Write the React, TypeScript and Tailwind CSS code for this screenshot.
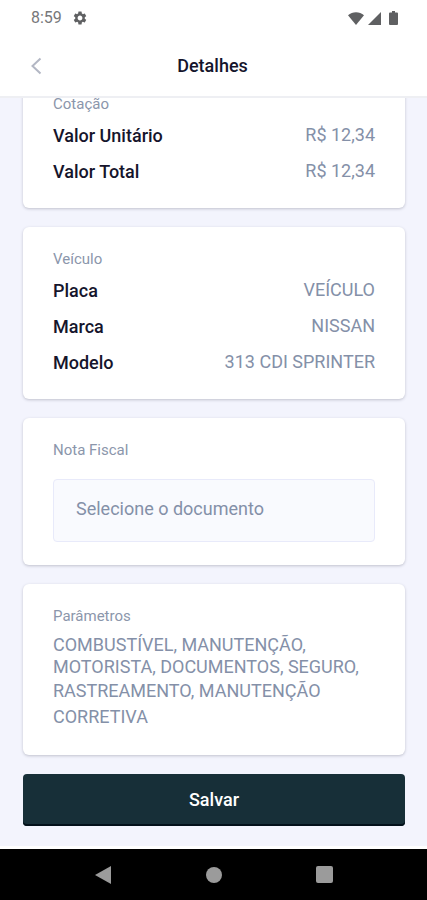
import type { ReactNode } from "react";
import { MdSettings } from "react-icons/md";

const quote = [
  { label: "Valor Unitário", value: "R$ 12,34" },
  { label: "Valor Total", value: "R$ 12,34" },
];

const vehicle = [
  { label: "Placa", value: "VEÍCULO" },
  { label: "Marca", value: "NISSAN" },
  { label: "Modelo", value: "313 CDI SPRINTER" },
];

function StatusBar() {
  return (
    <div className="flex h-9 items-center justify-between pl-[31px] pr-[29px] text-[#5f6062]">
      <div className="flex items-center gap-2.5">
        <span className="text-base text-[#77787a]">8:59</span>
        <MdSettings className="h-4 w-4" />
      </div>
      <div className="flex items-center gap-1">
        <svg viewBox="0 0 16 13" className="h-[13px] w-4" fill="currentColor">
          <path d="M0 3.2C4.4-.9 11.6-.9 16 3.2L8 13z" />
        </svg>
        <svg viewBox="0 0 13 13" className="h-[13px] w-[13px]" fill="currentColor">
          <path d="M13 0v13H0z" />
        </svg>
        <svg viewBox="0 0 9 14" className="ml-1 h-[14px] w-[9px]" fill="currentColor">
          <path d="M3 0h3v1.500h2a1 1 0 0 1 1 1V13a1 1 0 0 1-1 1H1a1 1 0 0 1-1-1V2.500a1 1 0 0 1 1-1h2z" />
        </svg>
      </div>
    </div>
  );
}

function Card({ title, children }: { title: string; children: ReactNode }) {
  return (
    <section className="rounded-md bg-white px-[30px] pt-6 shadow-[0_1px_3px_rgba(40,45,65,0.25)]">
      <h2 className="text-[15px] leading-4 text-[#8b96ab]">{title}</h2>
      {children}
    </section>
  );
}

function Rows({ items }: { items: { label: string; value: string }[] }) {
  return (
    <dl className="pt-1.5 pb-[18px]">
      {items.map((item) => (
        <div key={item.label} className="flex h-9 items-center justify-between text-lg">
          <dt className="font-medium text-[#15152c]">{item.label}</dt>
          <dd className="pb-0.5 text-[#8490a8]">{item.value}</dd>
        </div>
      ))}
    </dl>
  );
}

export default function App() {
  return (
    <div className="flex h-screen flex-col bg-[#f3f4fd] font-['Roboto','Noto_Sans',sans-serif]">
      <header className="border-b-2 border-[#eeeff3] bg-white">
        <StatusBar />
        <div className="grid h-[60px] grid-cols-[1fr_auto_1fr] items-center pl-[29px] pr-[31px]">
          <button type="button" aria-label="Voltar" className="w-4 text-[#b3b7c4]">
            <svg viewBox="0 0 16 18" className="h-[18px] w-4" fill="none" stroke="currentColor" strokeWidth="2">
              <path d="M11.500 1.500L3.500 9l8 7.500" />
            </svg>
          </button>
          <h1 className="text-lg font-medium text-[#15152c]">Detalhes</h1>
        </div>
      </header>

      {/* reversed column keeps the form scrolled to its end */}
      <main className="flex min-h-0 flex-1 flex-col-reverse overflow-y-auto [scrollbar-width:none]">
        <form className="flex flex-col gap-[19px] pt-5 pr-[22px] pb-5 pl-[23px]">
          <Card title="Cotação">
            <Rows items={quote} />
          </Card>
          <Card title="Veículo">
            <Rows items={vehicle} />
          </Card>
          <Card title="Nota Fiscal">
            <div className="pt-[21px] pb-[23px]">
              <button
                type="button"
                className="h-[63px] w-full rounded border border-[#e8eafa] bg-[#f9fafe] px-[22px] pb-1 text-left text-lg text-[#8490a8]"
              >
                Selecione o documento
              </button>
            </div>
          </Card>
          <Card title="Parâmetros">
            <div className="pt-2.5 pb-[25px] text-lg text-[#8490a8]">
              <p className="leading-[22px]">
                COMBUSTÍVEL, MANUTENÇÃO,
                <br />
                MOTORISTA, DOCUMENTOS, SEGURO,
              </p>
              <p className="leading-[26px]">
                RASTREAMENTO, MANUTENÇÃO
                <br />
                CORRETIVA
              </p>
            </div>
          </Card>
          <button
            type="submit"
            className="h-[52px] rounded bg-[#172f38] text-lg font-medium text-white shadow-[inset_0_-2px_0_#02101a]"
          >
            Salvar
          </button>
        </form>
      </main>

      <nav className="flex h-[54px] items-center justify-between border-t-3 border-white bg-black px-[94px] text-[#9b9b9b]">
        <button type="button" aria-label="Voltar">
          <svg viewBox="0 0 18 18" className="h-[18px] w-[18px]" fill="currentColor">
            <path d="M17 0v18L1 9z" />
          </svg>
        </button>
        <button type="button" aria-label="Início" className="h-4 w-4 rounded-full bg-[#9b9b9b]" />
        <button type="button" aria-label="Recentes" className="h-[17px] w-[17px] rounded-xs bg-[#9b9b9b]" />
      </nav>
    </div>
  );
}
